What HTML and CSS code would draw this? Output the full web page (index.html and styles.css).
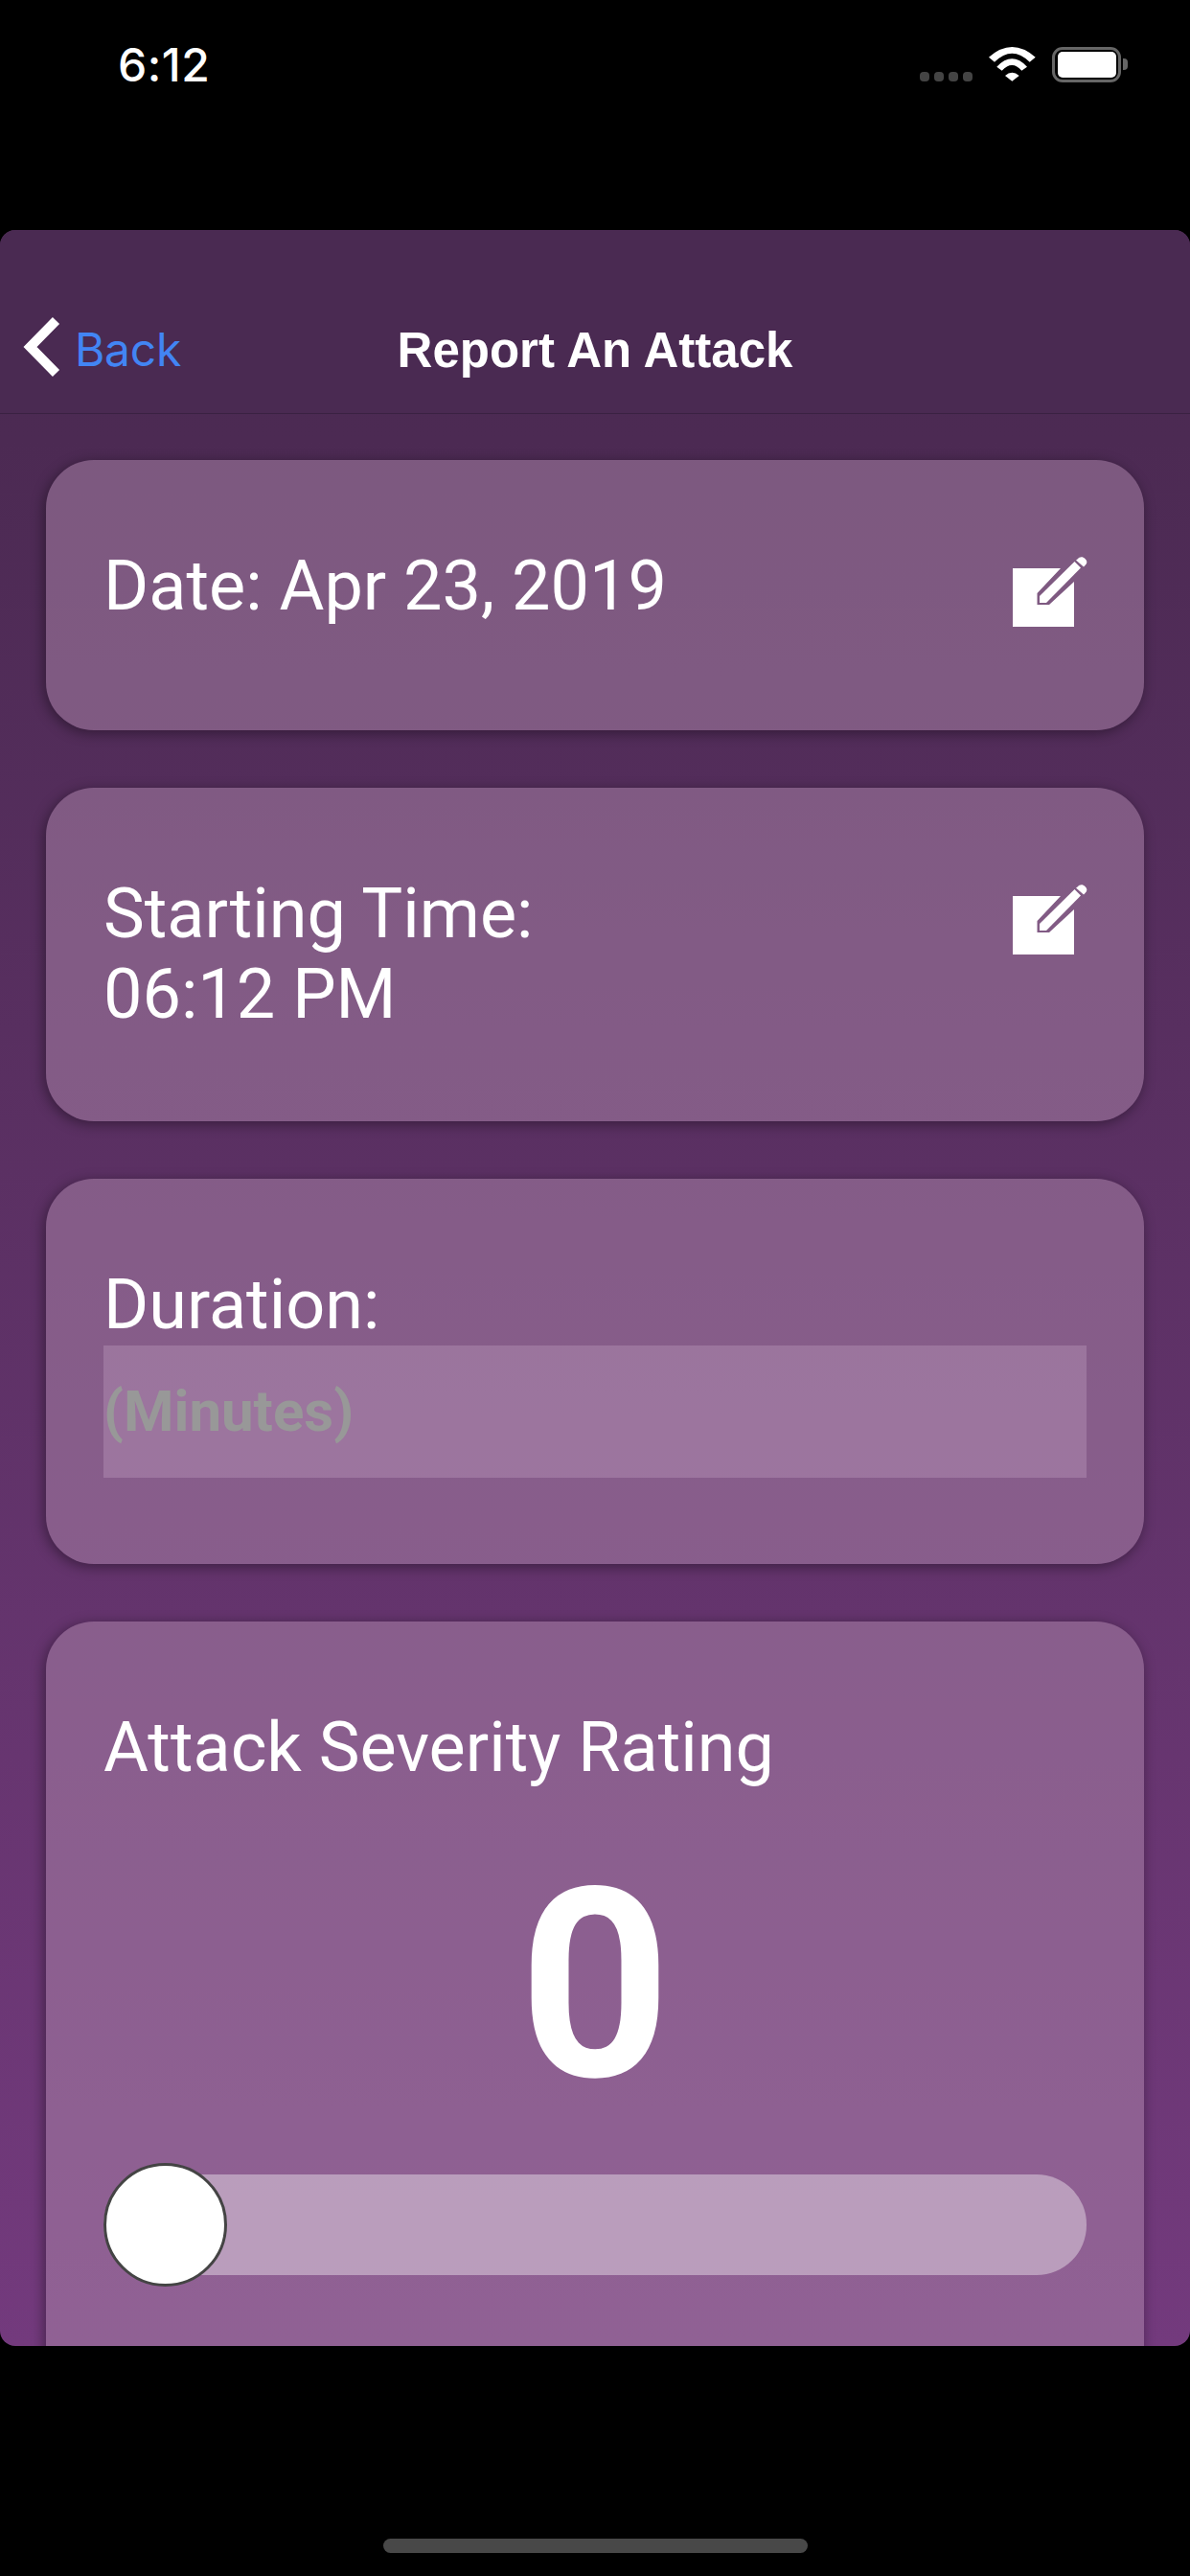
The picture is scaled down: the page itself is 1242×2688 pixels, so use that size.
FILE: index.html
```html
<!DOCTYPE html>
<html lang="en">
<head>
<meta charset="utf-8">
<title>Report An Attack</title>
<link rel="stylesheet" href="styles.css">
</head>
<body>
<div class="device">
  <div class="status">
    <span class="clock">6:12</span>
    <div class="status-icons">
      <div class="signal"><i></i><i></i><i></i><i></i></div>
      <svg class="wifi" viewBox="0 0 49 36" width="49" height="36"><path d="M0 10.700Q24.300-10.700 48.700 10.700L42.700 15.700Q24.300-2.300 6 15.700Z" fill="#fff"/><path d="M8.300 20.700Q24.300 3.900 40 20.700L34.300 24.700Q24.300 13.300 13.700 24.700Z" fill="#fff"/><path d="M17 30Q24.300 23.500 31.700 30L24.300 35.700Z" fill="#fff"/></svg>
      <div class="battery"><div class="battery-level"></div></div>
      <div class="battery-cap"></div>
    </div>
  </div>
  <main class="panel">
    <header class="nav">
      <a class="back">
        <svg class="chevron" viewBox="0 0 45 68" width="45" height="68"><path d="M38.500 6.500L11.500 34L38.500 61.500" fill="none" stroke="#fff" stroke-width="10"/></svg>
        <span class="back-label">Back</span>
      </a>
      <h1 class="title">Report An Attack</h1>
    </header>
    <div class="content">
      <section class="card card-date">
        <p class="label">Date: Apr 23, 2019</p>
        <svg class="edit" viewBox="0 0 78 75" width="78" height="75"><path d="M0 13H50L25.500 39V51H38L64 27V74H0Z" fill="#fff"/><path d="M28 49V42L64.500 6L71 12.500L35 49Z" fill="#fff"/><path d="M67.500 3.500C70 .5 73 .5 75.500 3C78 5.500 78 7.500 75.500 10L74 11.500L66 4.500Z" fill="#fff"/></svg>
      </section>
      <section class="card card-time">
        <p class="label">Starting Time:<br>06:12 PM</p>
        <svg class="edit" viewBox="0 0 78 75" width="78" height="75"><path d="M0 13H50L25.500 39V51H38L64 27V74H0Z" fill="#fff"/><path d="M28 49V42L64.500 6L71 12.500L35 49Z" fill="#fff"/><path d="M67.500 3.500C70 .5 73 .5 75.500 3C78 5.500 78 7.500 75.500 10L74 11.500L66 4.500Z" fill="#fff"/></svg>
      </section>
      <section class="card">
        <p class="label">Duration:</p>
        <div class="field"><span class="placeholder">(Minutes)</span></div>
      </section>
      <section class="card card-severity">
        <p class="label">Attack Severity Rating</p>
        <div class="score">0</div>
        <div class="slider"><div class="thumb"></div></div>
      </section>
    </div>
  </main>
  <div class="home-area"><div class="home-bar"></div></div>
</div>
</body>
</html>
```
FILE: styles.css
```css
* { box-sizing: border-box; }
html, body { margin: 0; padding: 0; background: #000; }
.device {
  width: 1242px;
  height: 2688px;
  display: flex;
  flex-direction: column;
  background: #000;
  overflow: hidden;
}
.status {
  height: 240px;
  flex: none;
  display: flex;
  justify-content: space-between;
  align-items: flex-start;
  padding: 40px 65px 0 123px;
}
.clock {
  font: 500 48px/56px "Inter", "Liberation Sans", sans-serif;
  color: #fff;
  letter-spacing: 0.5px;
}
.status-icons { display: flex; align-items: flex-start; padding-top: 9px; }
.signal { display: flex; gap: 5px; margin-top: 26px; margin-right: 17px; }
.signal i { width: 10px; height: 10px; border-radius: 4px; background: #444; }
.wifi { display: block; margin-right: 17px; }
.battery {
  width: 72px;
  height: 37px;
  border: 3px solid #666;
  border-radius: 11px;
  padding: 2px 2px 2px 3px;
}
.battery-level { width: 100%; height: 100%; background: #fff; border-radius: 5px; }
.battery-cap {
  width: 5px;
  height: 12px;
  margin: 12px 0 0 2px;
  background: #666;
  border-radius: 0 4px 4px 0;
}
.panel {
  height: 2208px;
  flex: none;
  border-radius: 16px;
  overflow: hidden;
  background: linear-gradient(180deg, #4a2a52 0%, #4c2a53 10%, #733a7d 100%);
  display: flex;
  flex-direction: column;
}
.nav {
  height: 192px;
  flex: none;
  position: relative;
  display: flex;
  align-items: flex-start;
  justify-content: center;
  background: #4a2a52;
  border-bottom: 1px solid #3a2142;
  padding-top: 98px;
}
.back {
  position: absolute;
  left: 20px;
  top: 88px;
  display: flex;
  align-items: center;
  gap: 13px;
}
.chevron { display: block; }
.back-label {
  font: 400 48px/56px "Inter", "Roboto", sans-serif;
  color: #4285f4;
  margin-top: 5px;
  letter-spacing: -0.3px;
}
.title {
  margin: 0;
  font: 700 51px/56px "Liberation Sans", sans-serif;
  color: #fff;
}
.content {
  flex: 1;
  display: flex;
  flex-direction: column;
  gap: 60px;
  padding: 48px 48px 0;
}
.card {
  flex: none;
  border-radius: 50px;
  background: rgba(173, 136, 171, 0.5);
  box-shadow: -2px 3px 14px rgba(0, 0, 0, 0.4);
  padding: 90px 60px;
}
.card-date, .card-time {
  display: flex;
  justify-content: space-between;
  align-items: flex-start;
}
.card-date { height: 282px; }
.card-time { height: 348px; }
.card-severity { padding-bottom: 200px; }
.edit { display: block; margin: 10px -1px 0 0; }
.label {
  margin: 0;
  font: 400 72px/84px "Roboto", sans-serif;
  color: #fff;
}
.field {
  height: 138px;
  background: rgba(255, 235, 255, 0.175);
  display: flex;
  align-items: center;
}
.placeholder { font: 700 60px/70px "Roboto", sans-serif; color: #989898; }
.score {
  font: 700 276px/324px "Roboto", sans-serif;
  color: #fff;
  text-align: center;
  margin-top: 44px;
}
.slider {
  position: relative;
  height: 105px;
  margin-top: 35px;
  border-radius: 52px;
  background: rgba(255, 255, 255, 0.385);
}
.thumb {
  position: absolute;
  left: 0;
  top: -12px;
  width: 129px;
  height: 129px;
  border-radius: 50%;
  background: #fff;
  border: 3px solid #444;
}
.home-area {
  flex: 1;
  display: flex;
  justify-content: center;
  padding-top: 201px;
}
.home-bar { width: 443px; height: 15px; border-radius: 8px; background: #484848; }
```
